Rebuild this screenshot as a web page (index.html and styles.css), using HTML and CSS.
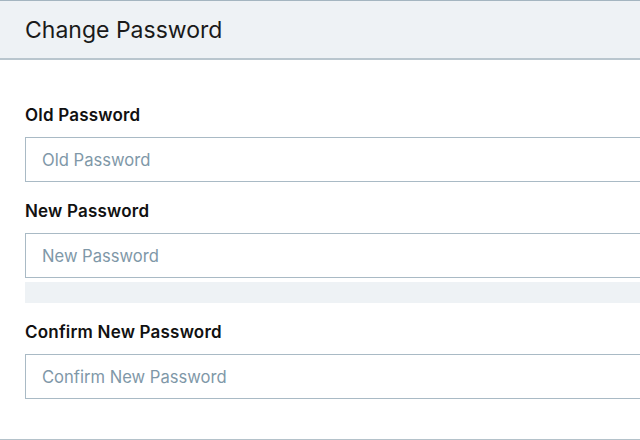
FILE: index.html
```html
<!DOCTYPE html>
<html lang="en">
<head>
  <meta charset="UTF-8">
  <meta name="viewport" content="width=device-width, initial-scale=1.0">
  <title>Change Password</title>
  <link rel="stylesheet" href="styles.css">
</head>
<body>
  <div class="card">
    <div class="card-header">
      <h2>Change Password</h2>
    </div>
    <form class="card-body">
      <div class="form-group">
        <label for="oldPassword">Old Password</label>
        <input type="password" id="oldPassword" placeholder="Old Password">
      </div>
      <div class="form-group">
        <label for="newPassword">New Password</label>
        <input type="password" id="newPassword" placeholder="New Password">
        <div class="strength-meter"></div>
      </div>
      <div class="form-group">
        <label for="confirmPassword">Confirm New Password</label>
        <input type="password" id="confirmPassword" placeholder="Confirm New Password">
      </div>
    </form>
  </div>
</body>
</html>
```

FILE: styles.css
```css
html, body {
  margin: 0;
  overflow: hidden;
}
body {
  font-family: Inter, "Noto Sans", Arial, sans-serif;
  background: #fff;
  color: #111;
}
.card {
  width: 820px;
  border-bottom: 1px solid #b4c2ca;
}
.card-header {
  height: 57px;
  padding: 0 25px;
  display: flex;
  align-items: center;
  background-color: #eef2f5;
  border-top: 1px solid #a4b5c0;
  border-bottom: 2px solid #b9c6ce;
}
.card-header h2 {
  margin: 0;
  padding-top: 1px;
  font-size: 23px;
  font-weight: 400;
  color: #1a1a1a;
}
.card-body {
  display: flex;
  flex-direction: column;
  gap: 19px;
  padding: 45px 25px 40px;
}
.form-group label {
  display: block;
  font-size: 17px;
  line-height: 20px;
  font-weight: 600;
  letter-spacing: 0.2px;
  margin-bottom: 12px;
}
.form-group input {
  display: block;
  box-sizing: border-box;
  width: 100%;
  height: 45px;
  padding: 0 16px;
  border: 1px solid #a9bac5;
  border-radius: 0;
  font-family: inherit;
  font-size: 16.6px;
  color: #222;
  outline: none;
}
.form-group input::placeholder {
  color: #7f98a8;
}
.strength-meter {
  height: 21px;
  margin-top: 4px;
  background-color: #eef2f5;
}
```
